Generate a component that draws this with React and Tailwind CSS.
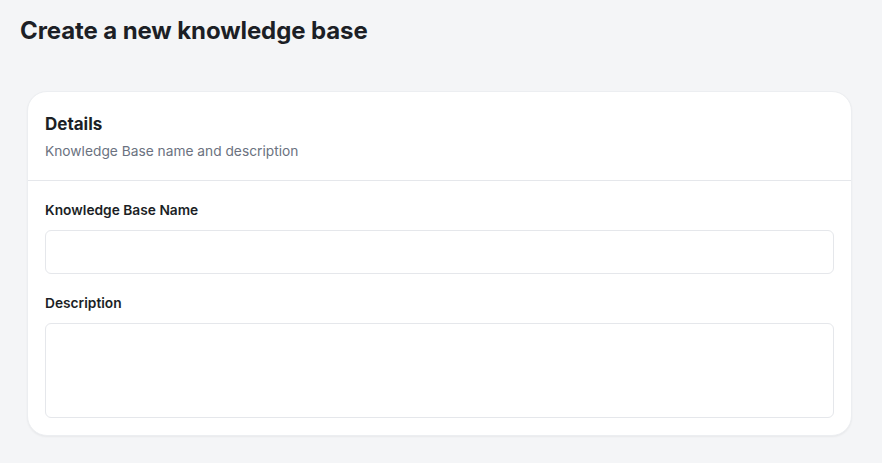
export default function App() {
  return (
    <div className="min-h-[463px] bg-[#f4f5f7] text-[#1c1f26]" style={{ fontFamily: "Inter, 'Noto Sans', sans-serif" }}>
      <div className="pt-[15px] pl-[20px]">
        <h1 className="text-[24px] leading-[32px] font-bold tracking-[-0.1px]">Create a new knowledge base</h1>
      </div>
      <div className="ml-[27px] mr-[30px] mt-[44px] rounded-[20px] bg-white shadow-[0_1px_2px_rgba(0,0,0,0.05)] border border-[#eceef1]">
        <div className="px-[17px] pt-[20px] pb-[19px] border-b border-[#e5e7eb]">
          <div className="text-[17px] leading-[24px] font-bold">Details</div>
          <div className="mt-[5px] text-[13.75px] leading-[20px] text-[#6b7280]">Knowledge Base name and description</div>
        </div>
        <div className="px-[17px] pt-[19px] pb-[17px]">
          <label className="block text-[13.75px] leading-[20px] font-semibold">Knowledge Base Name</label>
          <input className="mt-[10px] block w-full h-[44px] rounded-[6px] border border-[#e5e7eb] bg-white outline-none" />
          <label className="mt-[19px] block text-[13.75px] leading-[20px] font-semibold">Description</label>
          <textarea className="mt-[10px] block w-full h-[95px] rounded-[6px] border border-[#e5e7eb] bg-white outline-none resize-none" />
        </div>
      </div>
    </div>
  );
}
